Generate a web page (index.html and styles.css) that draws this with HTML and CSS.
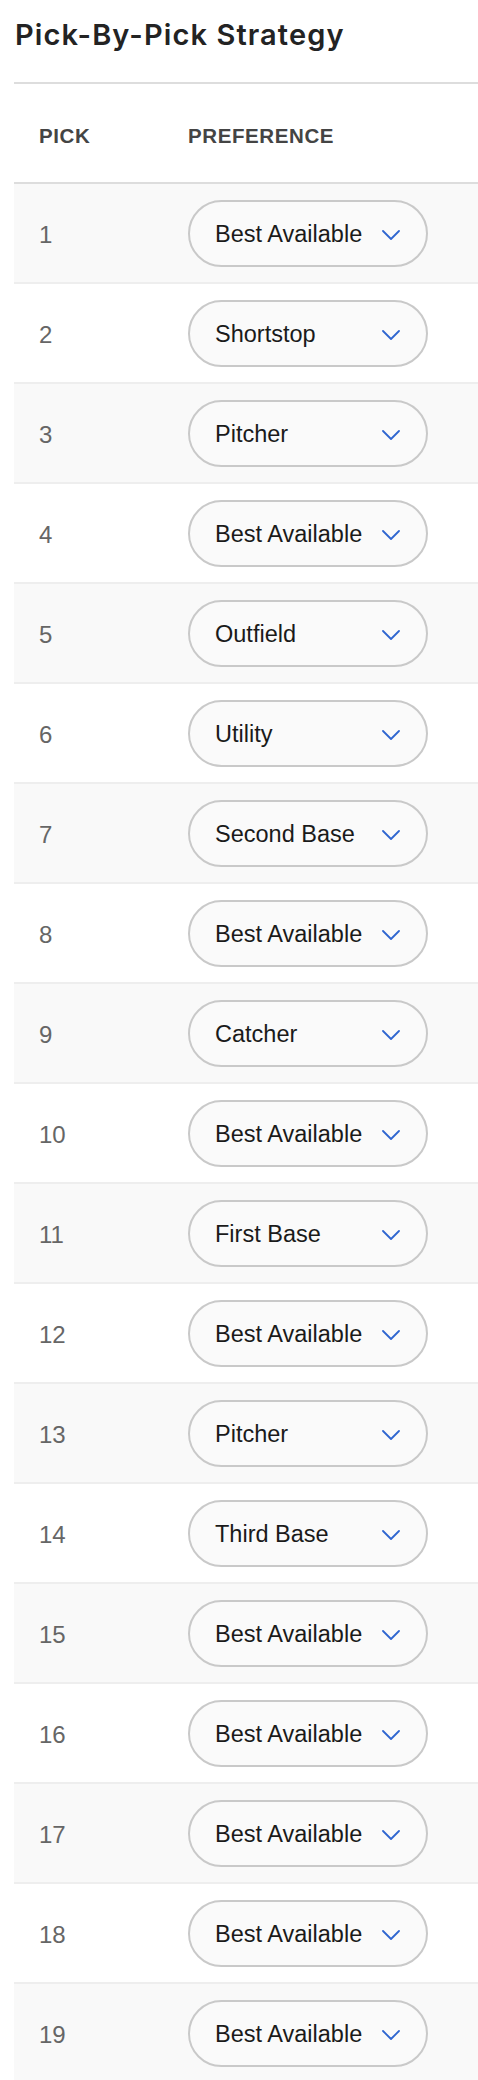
FILE: index.html
```html
<!DOCTYPE html>
<html lang="en">
<head>
<meta charset="utf-8">
<title>Pick-By-Pick Strategy</title>
<link rel="stylesheet" href="styles.css">
</head>
<body>
<main class="page">
  <h1 class="title">Pick-By-Pick Strategy</h1>
  <div class="rule"></div>
  <div class="table">
    <div class="row head">
      <div class="cell pick">PICK</div>
      <div class="cell pref">PREFERENCE</div>
    </div>
    <div class="row"><div class="cell pick">1</div><div class="cell pref"><div class="select"><span>Best Available</span><svg class="chev" width="18" height="10" viewBox="0 0 18 10"><polyline points="1,1 9,9 17,1"/></svg></div></div></div>
    <div class="row"><div class="cell pick">2</div><div class="cell pref"><div class="select"><span>Shortstop</span><svg class="chev" width="18" height="10" viewBox="0 0 18 10"><polyline points="1,1 9,9 17,1"/></svg></div></div></div>
    <div class="row"><div class="cell pick">3</div><div class="cell pref"><div class="select"><span>Pitcher</span><svg class="chev" width="18" height="10" viewBox="0 0 18 10"><polyline points="1,1 9,9 17,1"/></svg></div></div></div>
    <div class="row"><div class="cell pick">4</div><div class="cell pref"><div class="select"><span>Best Available</span><svg class="chev" width="18" height="10" viewBox="0 0 18 10"><polyline points="1,1 9,9 17,1"/></svg></div></div></div>
    <div class="row"><div class="cell pick">5</div><div class="cell pref"><div class="select"><span>Outfield</span><svg class="chev" width="18" height="10" viewBox="0 0 18 10"><polyline points="1,1 9,9 17,1"/></svg></div></div></div>
    <div class="row"><div class="cell pick">6</div><div class="cell pref"><div class="select"><span>Utility</span><svg class="chev" width="18" height="10" viewBox="0 0 18 10"><polyline points="1,1 9,9 17,1"/></svg></div></div></div>
    <div class="row"><div class="cell pick">7</div><div class="cell pref"><div class="select"><span>Second Base</span><svg class="chev" width="18" height="10" viewBox="0 0 18 10"><polyline points="1,1 9,9 17,1"/></svg></div></div></div>
    <div class="row"><div class="cell pick">8</div><div class="cell pref"><div class="select"><span>Best Available</span><svg class="chev" width="18" height="10" viewBox="0 0 18 10"><polyline points="1,1 9,9 17,1"/></svg></div></div></div>
    <div class="row"><div class="cell pick">9</div><div class="cell pref"><div class="select"><span>Catcher</span><svg class="chev" width="18" height="10" viewBox="0 0 18 10"><polyline points="1,1 9,9 17,1"/></svg></div></div></div>
    <div class="row"><div class="cell pick">10</div><div class="cell pref"><div class="select"><span>Best Available</span><svg class="chev" width="18" height="10" viewBox="0 0 18 10"><polyline points="1,1 9,9 17,1"/></svg></div></div></div>
    <div class="row"><div class="cell pick">11</div><div class="cell pref"><div class="select"><span>First Base</span><svg class="chev" width="18" height="10" viewBox="0 0 18 10"><polyline points="1,1 9,9 17,1"/></svg></div></div></div>
    <div class="row"><div class="cell pick">12</div><div class="cell pref"><div class="select"><span>Best Available</span><svg class="chev" width="18" height="10" viewBox="0 0 18 10"><polyline points="1,1 9,9 17,1"/></svg></div></div></div>
    <div class="row"><div class="cell pick">13</div><div class="cell pref"><div class="select"><span>Pitcher</span><svg class="chev" width="18" height="10" viewBox="0 0 18 10"><polyline points="1,1 9,9 17,1"/></svg></div></div></div>
    <div class="row"><div class="cell pick">14</div><div class="cell pref"><div class="select"><span>Third Base</span><svg class="chev" width="18" height="10" viewBox="0 0 18 10"><polyline points="1,1 9,9 17,1"/></svg></div></div></div>
    <div class="row"><div class="cell pick">15</div><div class="cell pref"><div class="select"><span>Best Available</span><svg class="chev" width="18" height="10" viewBox="0 0 18 10"><polyline points="1,1 9,9 17,1"/></svg></div></div></div>
    <div class="row"><div class="cell pick">16</div><div class="cell pref"><div class="select"><span>Best Available</span><svg class="chev" width="18" height="10" viewBox="0 0 18 10"><polyline points="1,1 9,9 17,1"/></svg></div></div></div>
    <div class="row"><div class="cell pick">17</div><div class="cell pref"><div class="select"><span>Best Available</span><svg class="chev" width="18" height="10" viewBox="0 0 18 10"><polyline points="1,1 9,9 17,1"/></svg></div></div></div>
    <div class="row"><div class="cell pick">18</div><div class="cell pref"><div class="select"><span>Best Available</span><svg class="chev" width="18" height="10" viewBox="0 0 18 10"><polyline points="1,1 9,9 17,1"/></svg></div></div></div>
    <div class="row"><div class="cell pick">19</div><div class="cell pref"><div class="select"><span>Best Available</span><svg class="chev" width="18" height="10" viewBox="0 0 18 10"><polyline points="1,1 9,9 17,1"/></svg></div></div></div>
  </div>
</main>
</body>
</html>
```

FILE: styles.css
```css
html, body {
  margin: 0;
  padding: 0;
  background: #ffffff;
}

body {
  font-family: "Liberation Sans", Arial, sans-serif;
  overflow: hidden;
}

.page {
  padding-left: 14px;
}

.title {
  margin: 18px 0 0 1px;
  font-family: Inter, "Liberation Sans", sans-serif;
  font-weight: 600;
  font-size: 29px;
  line-height: 34px;
  color: #232323;
  letter-spacing: 1.1px;
}

.rule {
  margin-top: 30px;
  height: 2px;
  background: #dddddd;
}

.table {
  display: flex;
  flex-direction: column;
}

.row {
  display: flex;
  align-items: center;
  height: 98px;
  border-bottom: 2px solid #eeeeee;
}

.row:nth-child(even) {
  background: #f9f9f9;
}

.row.head {
  border-bottom-color: #dddddd;
  background: #ffffff;
}

.cell {
  box-sizing: border-box;
}

.cell.pick {
  width: 149px;
  padding-left: 25px;
  padding-top: 3px;
  font-size: 24px;
  color: #666666;
}

.cell.pref {
  padding-left: 25px;
}

.head .cell {
  padding-top: 5px;
  font-size: 20.5px;
  font-weight: 700;
  letter-spacing: 0.6px;
  color: #444444;
}

.select {
  box-sizing: border-box;
  width: 240px;
  height: 67px;
  margin-top: 1px;
  border: 2px solid #c9c9c9;
  border-radius: 34px;
  background: #fafafa;
  display: flex;
  align-items: center;
  justify-content: space-between;
  padding: 0 26px 0 25px;
  font-size: 23.5px;
  color: #1a1a1a;
}

.select span {
  padding-top: 1px;
}

.chev {
  display: block;
  margin-top: 2px;
}

.chev polyline {
  fill: none;
  stroke: #2f66d0;
  stroke-width: 1.8;
  stroke-linecap: round;
  stroke-linejoin: round;
}
```
